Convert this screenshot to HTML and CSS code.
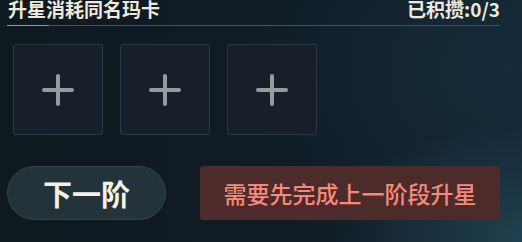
FILE: index.html
```
<!DOCTYPE html>
<html lang="zh">
<head>
<meta charset="utf-8">
<link rel="stylesheet" href="styles.css">
</head>
<body>
<div class="panel">
  <div class="header">
    <span class="title">升星消耗同名玛卡</span>
    <span class="count">已积攒:0/3</span>
  </div>
  <div class="rule"></div>
  <div class="slots">
    <div class="slot"><span class="plus"></span></div>
    <div class="slot"><span class="plus"></span></div>
    <div class="slot"><span class="plus"></span></div>
  </div>
  <div class="actions">
    <button class="btn-next">下一阶</button>
    <div class="btn-warn">需要先完成上一阶段升星</div>
  </div>
</div>
</body>
</html>
```
FILE: styles.css
```
html, body {
  margin: 0;
  padding: 0;
  width: 522px;
  height: 242px;
  overflow: hidden;
}
body {
  background:
    radial-gradient(ellipse 200px 120px at 530px 240px, rgba(36,72,88,0.8), rgba(36,72,88,0) 100%),
    radial-gradient(ellipse 280px 180px at 500px 70px, rgba(22,48,64,0.6), rgba(22,48,64,0) 100%),
    linear-gradient(90deg, #0f1920 0%, #101b24 50%, #13232f 100%);
  font-family: "Noto Sans CJK SC", "Noto Sans", sans-serif;
}
.panel {
  display: flex;
  flex-direction: column;
  width: 522px;
  height: 242px;
}
.header {
  display: flex;
  justify-content: space-between;
  align-items: center;
  margin: 0 22px 0 8px;
  height: 18px;
  font-size: 19px;
  line-height: 18px;
  font-weight: 700;
  color: #eee9dc;
}
.rule {
  margin: 7px 22px 0 7px;
  height: 1px;
  background: linear-gradient(90deg, #8a9aa2 0px, #8a9aa2 40px, #44535d 44px, #44535d 100%);
}
.slots {
  display: flex;
  gap: 17px;
  margin: 18px 0 0 13px;
}
.slot {
  width: 88px;
  height: 89px;
  border: 1px solid #2b3741;
  border-radius: 2px;
  background: #17202a;
  display: flex;
  align-items: center;
  justify-content: center;
  box-sizing: content-box;
}
.plus {
  position: relative;
  width: 32px;
  height: 32px;
  display: block;
}
.plus::before, .plus::after {
  content: "";
  position: absolute;
  background: #939c9e;
  border-radius: 2px;
}
.plus::before {
  left: 0;
  top: 14px;
  width: 32px;
  height: 4px;
}
.plus::after {
  left: 14px;
  top: 0;
  width: 4px;
  height: 32px;
}
.actions {
  display: flex;
  align-items: center;
  gap: 34px;
  margin: 31px 0 0 7px;
}
.btn-next {
  width: 159px;
  height: 54px;
  border-radius: 27px;
  border: 1px solid #33434b;
  background: #24323a;
  color: #f4f1e6;
  font-family: "Noto Sans CJK SC", "Noto Sans", sans-serif;
  font-size: 29px;
  line-height: 1;
  font-weight: 700;
  padding: 0;
}
.btn-warn {
  width: 300px;
  height: 54px;
  border-radius: 3px;
  background: #4d2b2a;
  color: #f58a7c;
  font-size: 23px;
  font-weight: 500;
  display: flex;
  align-items: center;
  justify-content: center;
}
```
